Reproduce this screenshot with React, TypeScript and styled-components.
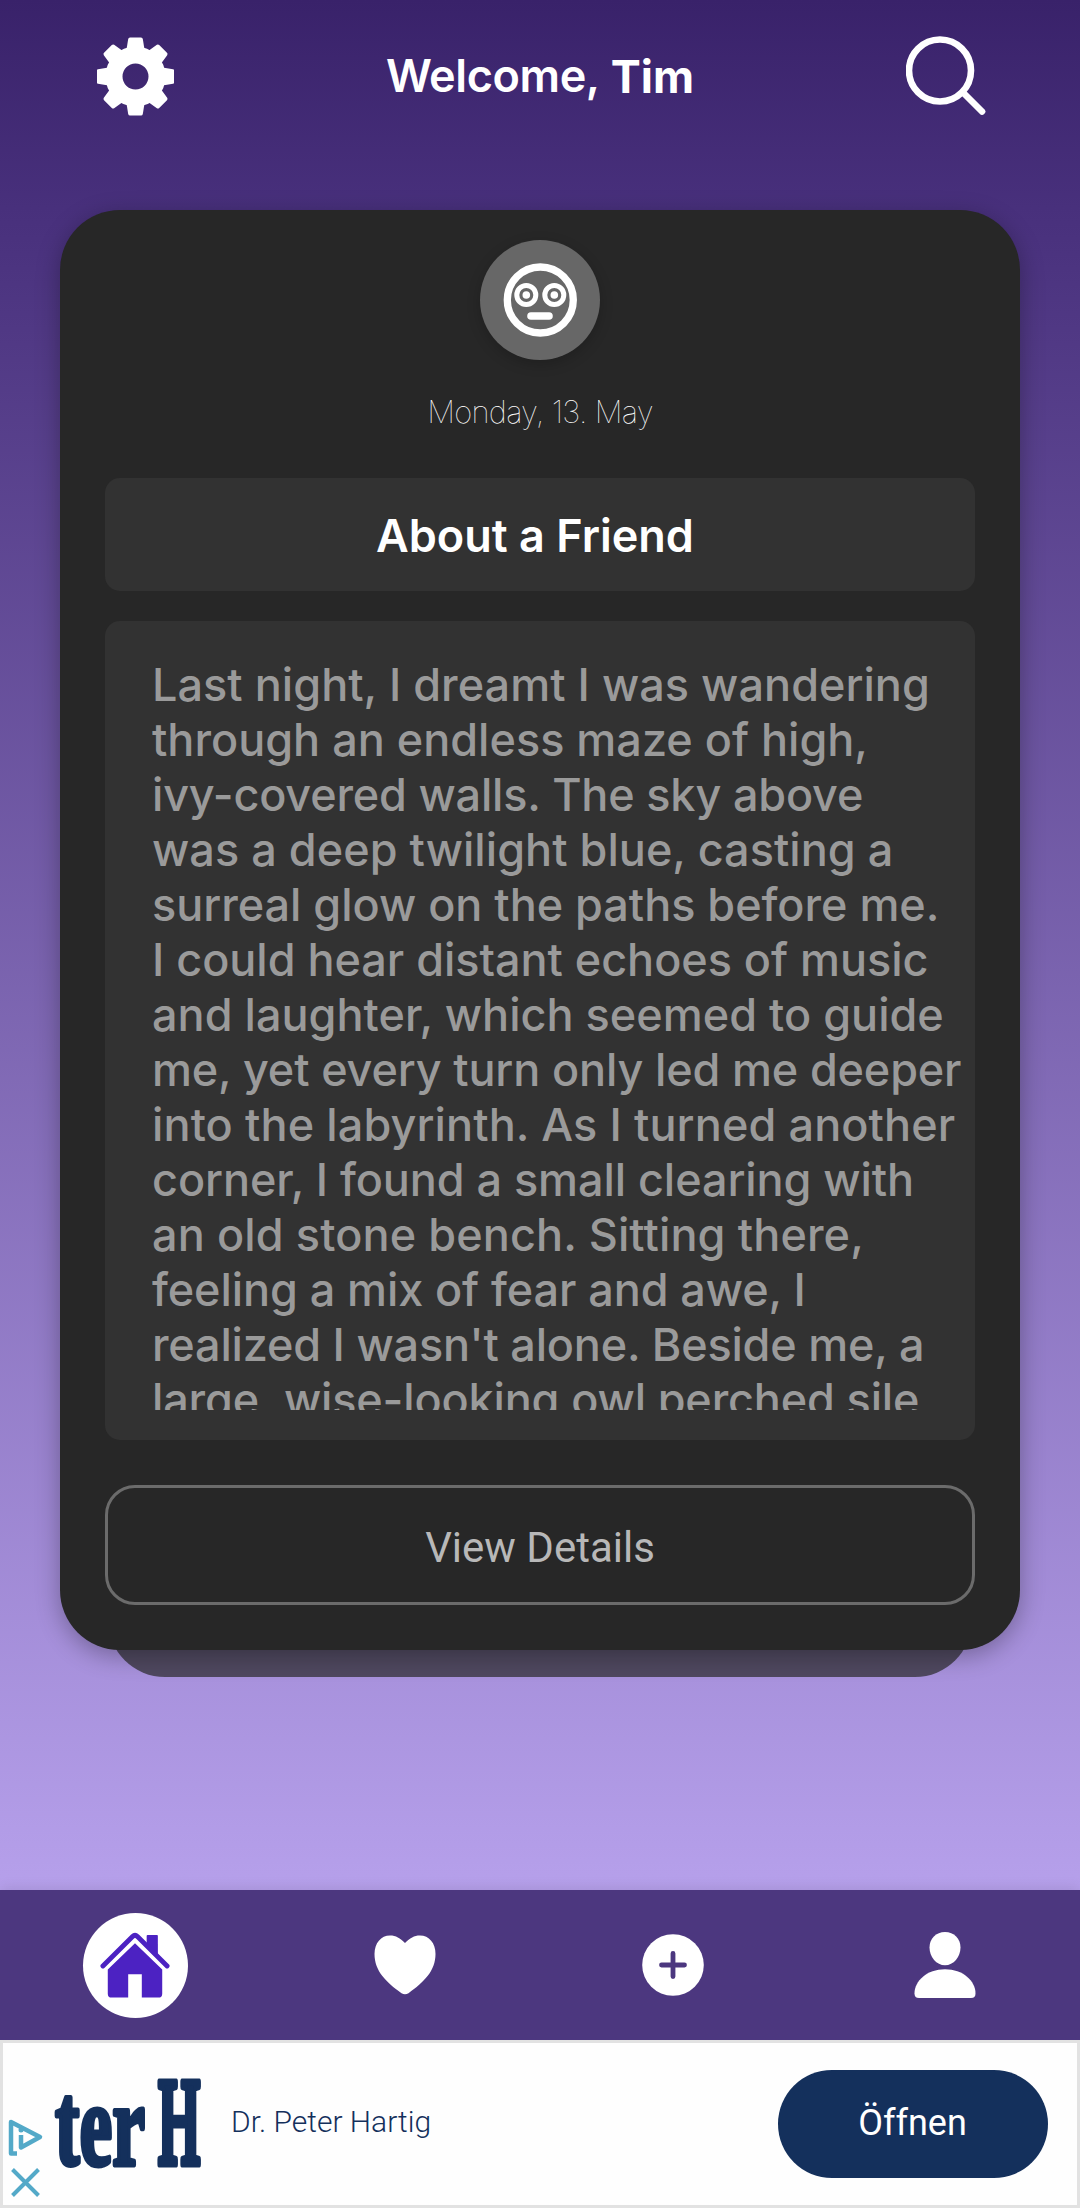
import React from 'react';
import styled, { createGlobalStyle } from 'styled-components';

const GlobalStyle = createGlobalStyle`
  * { box-sizing: border-box; }
  body { margin: 0; font-family: Inter, Roboto, sans-serif; }
`;

const Screen = styled.div`
  display: flex;
  flex-direction: column;
  width: 1080px;
  height: 2208px;
  overflow: hidden;
`;

const Content = styled.main`
  flex: 1;
  display: flex;
  flex-direction: column;
  background: linear-gradient(180deg, #39226a 0%, #48307c 11%, #b6a0eb 100%);
`;

const TopBar = styled.header`
  height: 210px;
  padding: 36px 94px 0 97px;
  display: flex;
  justify-content: space-between;
  align-items: flex-start;
`;

const Greeting = styled.h1`
  margin: 13px 0 0;
  color: #fff;
  display: flex;
  align-items: flex-start;
  gap: 11px;
  font-size: 45px;
  line-height: 54px;
  font-weight: 600;
  letter-spacing: -0.4px;
  white-space: nowrap;
  strong { padding-top: 1px; font-weight: 700; letter-spacing: 0; }
`;

const Stack = styled.section`
  display: flex;
  flex-direction: column;
  align-items: center;
`;

const Card = styled.article`
  position: relative;
  width: 960px;
  height: 1440px;
  padding: 30px 45px 45px;
  display: flex;
  flex-direction: column;
  align-items: center;
  border-radius: 60px;
  background: #272727;
  box-shadow: 0 6px 24px rgba(0, 0, 0, 0.3);
`;

const NextCard = styled.div`
  width: 864px;
  height: 116px;
  margin-top: -89px;
  border-radius: 57px;
  background: rgba(39, 39, 39, 0.69);
`;

const Mood = styled.div`
  width: 120px;
  height: 120px;
  display: grid;
  place-items: center;
  border-radius: 50%;
  background: #676767;
  box-shadow: 0 4px 14px rgba(0, 0, 0, 0.2);
`;

const DateLine = styled.time`
  margin-top: 32px;
  height: 86px;
  color: #fff;
  font-size: 31px;
  line-height: 40px;
  font-weight: 100;
  letter-spacing: -0.7px;
`;

const Title = styled.h2`
  width: 870px;
  height: 113px;
  margin: 0;
  padding: 2px 10px 0 0;
  display: flex;
  align-items: center;
  justify-content: center;
  border-radius: 15px;
  background: #323232;
  color: #fff;
  font-size: 45px;
  font-weight: 600;
`;

const Entry = styled.div`
  width: 870px;
  height: 819px;
  margin-top: 30px;
  padding: 36px 0 30px 47px;
  border-radius: 15px;
  background: #323232;
`;

const EntryText = styled.p`
  margin: 0;
  height: 753px;
  overflow: hidden;
  color: #9a9a9a;
  font-size: 45px;
  line-height: 55px;
  font-weight: 500;
`;

const EntryLine = styled.span<{ $tracking: number }>`
  display: block;
  white-space: nowrap;
  letter-spacing: ${(p) => p.$tracking}px;
`;

const DetailsButton = styled.button`
  width: 870px;
  height: 120px;
  margin-top: 45px;
  padding: 4px 0 0;
  border: 3px solid #6b6b6b;
  border-radius: 30px;
  background: transparent;
  color: #b8b8b8;
  font: 400 42px Roboto, sans-serif;
`;

const NavBar = styled.nav`
  height: 150px;
  display: grid;
  grid-template-columns: repeat(4, 270px);
  background: #4c377f;
  box-shadow: 0 -2px 12px rgba(0, 0, 0, 0.1);
`;

const NavItem = styled.a<{ $nudge?: number }>`
  display: grid;
  place-items: center;
  padding-right: ${(p) => p.$nudge ?? 0}px;
`;

const ActiveCircle = styled.span`
  width: 105px;
  height: 105px;
  display: grid;
  place-items: center;
  border-radius: 50%;
  background: #fff;
`;

const Ad = styled.aside`
  height: 168px;
  padding: 0 29px 0 5px;
  display: flex;
  align-items: center;
  border: 3px solid #e2e2e2;
  background: #fefefe;
`;

const AdControls = styled.div`
  align-self: flex-end;
  width: 40px;
  height: 86px;
`;

const AdLogo = styled.svg`
  margin-left: 5px;
  overflow: visible;
`;

const Advertiser = styled.span`
  flex: 1;
  margin-left: 29px;
  padding-bottom: 5px;
  color: #14305c;
  font: 300 30px Roboto, sans-serif;
`;

const OpenButton = styled.button`
  width: 270px;
  height: 108px;
  padding: 0 1px 3px 0;
  border: 0;
  border-radius: 54px;
  background: #14305c;
  color: #fff;
  font: 400 36px Roboto, sans-serif;
`;

const entryLines: { text: string; tracking: number }[] = [
  { text: 'Last night, I dreamt I was wandering', tracking: 0.04 },
  { text: 'through an endless maze of high,', tracking: 0 },
  { text: 'ivy-covered walls. The sky above', tracking: -0.18 },
  { text: 'was a deep twilight blue, casting a', tracking: 0.04 },
  { text: 'surreal glow on the paths before me.', tracking: -0.03 },
  { text: 'I could hear distant echoes of music', tracking: -0.03 },
  { text: 'and laughter, which seemed to guide', tracking: 0.02 },
  { text: 'me, yet every turn only led me deeper', tracking: -0.15 },
  { text: 'into the labyrinth. As I turned another', tracking: 0.11 },
  { text: 'corner, I found a small clearing with', tracking: -0.07 },
  { text: 'an old stone bench. Sitting there,', tracking: 0.12 },
  { text: 'feeling a mix of fear and awe, I', tracking: -0.09 },
  { text: "realized I wasn't alone. Beside me, a", tracking: -0.19 },
  { text: 'large, wise-looking owl perched sile', tracking: -0.15 },
];

const Gear = () => (
  <svg width="77" height="81" viewBox="-38.5 -40.5 77 81" fill="#fff">
    {[0, 45, 90, 135, 180, 225, 270, 315].map((a) => (
      <path key={a} transform={`rotate(${a})`} d="M-9 -27 L-7.3 -37.5 Q-7 -39 -5.5 -39 H5.5 Q7 -39 7.3 -37.5 L9 -27Z" />
    ))}
    <circle r="21.5" fill="none" stroke="#fff" strokeWidth="17" />
  </svg>
);

const Search = () => (
  <svg width="80" height="82" viewBox="0 0 80 82" fill="none" stroke="#fff" strokeWidth="6.6" strokeLinecap="round">
    <circle cx="34" cy="34.500" r="31" />
    <path d="M57 56.500 76 75.500" />
  </svg>
);

const FlushedFace = () => (
  <svg width="74" height="74" viewBox="0 0 74 74" fill="none" stroke="#fff">
    <circle cx="37.300" cy="37" r="33" strokeWidth="7.3" />
    <circle cx="23.300" cy="32" r="9.5" strokeWidth="5" />
    <circle cx="51.300" cy="32" r="9.5" strokeWidth="5" />
    <circle cx="23.300" cy="32" r="3.8" fill="#fff" stroke="none" />
    <circle cx="51.300" cy="32" r="3.8" fill="#fff" stroke="none" />
    <path d="M28 53H46" strokeWidth="7.6" strokeLinecap="round" />
  </svg>
);

const House = () => (
  <svg width="70" height="67" viewBox="0 0 72 68" fill="#4c22c2">
    <path d="M8 38 36 11 64 38V63Q64 67 60 67H43V43H29V67H12Q8 67 8 63Z" />
    <path d="M48 3.500Q48 2.500 49 2.500H58.500Q59.500 2.500 59.500 3.500V24L48 12Z" />
    <path d="M3 34.500 33.500 4.200Q36 1.800 38.500 4.200L69 34.500" fill="none" stroke="#4c22c2" strokeWidth="5" strokeLinecap="round" />
  </svg>
);

const Heart = () => (
  <svg width="62" height="60" viewBox="0 0 62 60" fill="#fff">
    <path d="M31 8C26 3 22 .5 16 .5 7 .5 .5 8 .5 19 .5 36 12 47 27.500 58.200Q31 60.500 34.500 58.200C50 47 61.500 36 61.500 19 61.500 8 55 .5 46 .5 40 .5 36 3 31 8Z" />
  </svg>
);

const Plus = () => (
  <svg width="62" height="62" viewBox="0 0 62 62">
    <circle cx="31" cy="31" r="30.800" fill="#fff" />
    <path d="M19.500 31H42.500M31 19.500V42.500" stroke="#4c377f" strokeWidth="4.800" strokeLinecap="round" />
  </svg>
);

const Person = () => (
  <svg width="62" height="66" viewBox="0 0 62 66" fill="#fff">
    <path d="M31 0C40 0 46.500 6.500 46.500 15.500 46.500 25 39.500 33.300 31 33.300S15.500 25 15.500 15.500C15.500 6.500 22 0 31 0Z" />
    <path d="M31 37.300C49 37.300 61.500 49 61.500 61.500Q61.500 66 57 66H5Q.5 66 .5 61.500C.5 49 13 37.300 31 37.300Z" />
  </svg>
);

export default function App() {
  return (
    <Screen>
      <GlobalStyle />
      <Content>
        <TopBar>
          <Gear />
          <Greeting><span>Welcome,</span><strong>Tim</strong></Greeting>
          <Search />
        </TopBar>
        <Stack>
          <Card>
            <Mood><FlushedFace /></Mood>
            <DateLine>Monday, 13. May</DateLine>
            <Title>About a Friend</Title>
            <Entry>
              <EntryText>
                {entryLines.map((line) => (
                  <EntryLine key={line.text} $tracking={line.tracking}>{line.text}</EntryLine>
                ))}
              </EntryText>
            </Entry>
            <DetailsButton>View Details</DetailsButton>
          </Card>
          <NextCard />
        </Stack>
      </Content>
      <NavBar>
        <NavItem><ActiveCircle><House /></ActiveCircle></NavItem>
        <NavItem><Heart /></NavItem>
        <NavItem $nudge={4}><Plus /></NavItem>
        <NavItem><Person /></NavItem>
      </NavBar>
      <Ad>
        <AdControls>
          <svg width="36" height="80" viewBox="0 0 36 80" fill="none" stroke="#53a9c8" strokeWidth="4.500">
            <path d="M9 34.500H3V3L32 18 13 28.500V16" strokeLinejoin="round" />
            <circle cx="13" cy="11" r="2.500" fill="#53a9c8" stroke="none" />
            <path d="M4.500 50.500 30.500 76.500M30.500 50.500 4.500 76.500" strokeWidth="4" />
          </svg>
        </AdControls>
        <AdLogo
          width="149"
          height="96"
          viewBox="0 0 149 96"
          fill="#14305c"
          stroke="#14305c"
          strokeLinejoin="round"
          fontFamily="Liberation Serif, serif"
          fontWeight="700"
        >
          <text transform="translate(2 88.500) scale(.625 1)" fontSize="118" strokeWidth="5">ter</text>
          <text transform="translate(105 88) scale(.435 1)" fontSize="125" strokeWidth="7">H</text>
        </AdLogo>
        <Advertiser>Dr. Peter Hartig</Advertiser>
        <OpenButton>Öffnen</OpenButton>
      </Ad>
    </Screen>
  );
}
